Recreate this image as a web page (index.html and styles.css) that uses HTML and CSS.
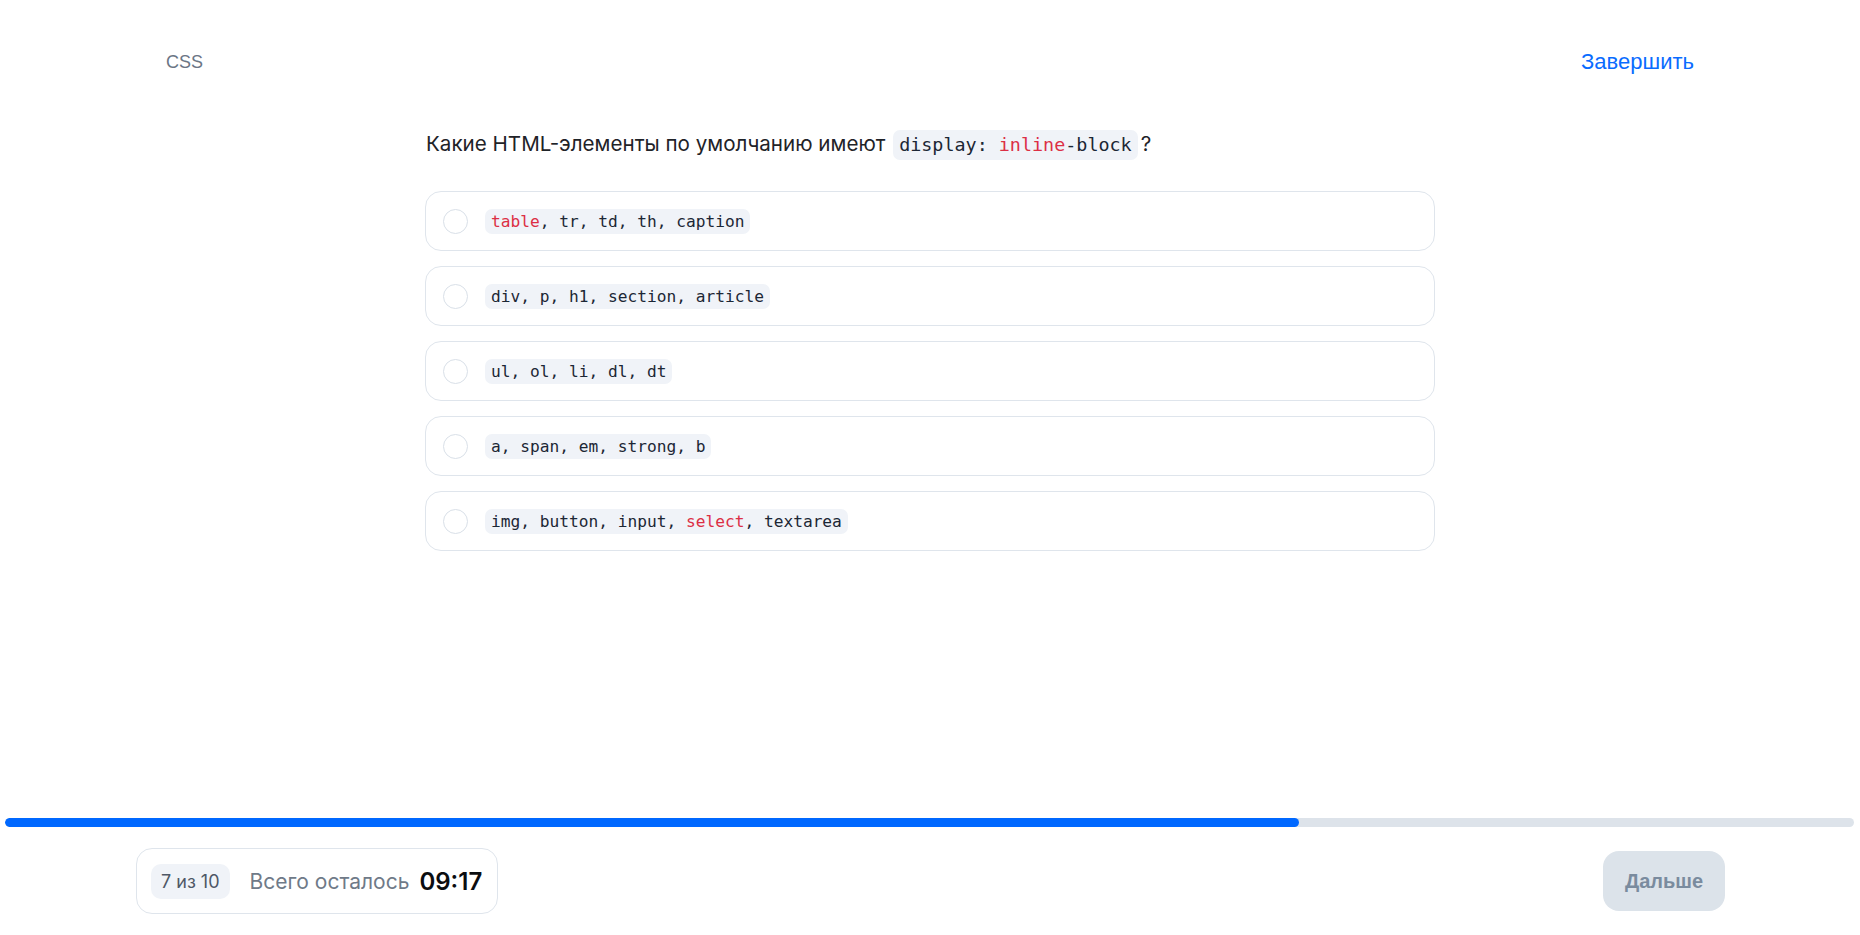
FILE: index.html
```html
<!DOCTYPE html>
<html lang="ru">
<head>
<meta charset="utf-8">
<title>CSS тест</title>
<link rel="stylesheet" href="styles.css">
</head>
<body>
<div class="page">
  <header class="topbar">
    <span class="topic">CSS</span>
    <a class="finish" href="#">Завершить</a>
  </header>

  <main class="quiz">
    <h1 class="question">Какие HTML-элементы по умолчанию имеют <code class="qcode">display: <span class="kw">inline</span>-block</code>?</h1>
    <ul class="options">
      <li class="option"><span class="radio"></span><code class="ocode"><span class="kw">table</span>, tr, td, th, caption</code></li>
      <li class="option"><span class="radio"></span><code class="ocode">div, p, h1, section, article</code></li>
      <li class="option"><span class="radio"></span><code class="ocode">ul, ol, li, dl, dt</code></li>
      <li class="option"><span class="radio"></span><code class="ocode">a, span, em, strong, b</code></li>
      <li class="option"><span class="radio"></span><code class="ocode">img, button, input, <span class="kw">select</span>, textarea</code></li>
    </ul>
  </main>

  <div class="progress"><div class="progress-fill" style="width:70%"></div></div>

  <footer class="bottombar">
    <div class="status">
      <span class="counter">7 из 10</span>
      <span class="remain">Всего осталось</span>
      <span class="timer">09:17</span>
    </div>
    <button class="next" type="button">Дальше</button>
  </footer>
</div>
</body>
</html>
```

FILE: styles.css
```css
* { box-sizing: border-box; }

html, body {
  margin: 0;
  padding: 0;
  background: #ffffff;
}

body {
  font-family: Inter, "Noto Sans", sans-serif;
  color: #1d2126;
}

.page {
  height: 935px;
  display: flex;
  flex-direction: column;
}

.topbar {
  display: flex;
  justify-content: space-between;
  align-items: center;
  padding: 50px 166px 0 166px;
  height: 74px;
  font-family: "Liberation Sans", Arial, sans-serif;
}

.topic {
  font-size: 18px;
  line-height: 24px;
  color: #6b7685;
}

.finish {
  font-size: 22px;
  line-height: 24px;
  color: #0a6cff;
  text-decoration: none;
}

.quiz {
  width: 1010px;
  margin: 54px auto 0 auto;
}

.question {
  margin: 0;
  font-size: 20.6px;
  font-weight: 400;
  line-height: 32px;
  color: #1f2328;
  padding-left: 1px;
}

code {
  font-family: "DejaVu Sans Mono", "Liberation Mono", monospace;
  background: #f0f3f8;
  color: #1c2735;
  border-radius: 7px;
}

.qcode {
  font-size: 18.4px;
  padding: 4px 6px 5px 6px;
  margin: 0 3px 0 2px;
}

.kw { color: #dc2f45; }

.options {
  list-style: none;
  margin: 30px 0 0 0;
  padding: 0;
  display: flex;
  flex-direction: column;
  gap: 15px;
}

.option {
  height: 60px;
  border: 1px solid #dfe5ec;
  border-radius: 16px;
  display: flex;
  align-items: center;
  gap: 17px;
  padding: 0 0 0 17px;
}

.radio {
  width: 25px;
  height: 25px;
  border: 1px solid #d9e0e8;
  border-radius: 50%;
  flex: none;
}

.ocode {
  font-size: 16.2px;
  line-height: 21px;
  padding: 2px 6px;
}

.progress {
  margin: auto 6px 0 5px;
  height: 9px;
  background: #dde3ea;
  border-radius: 5px;
  overflow: hidden;
}

.progress-fill {
  height: 100%;
  background: #0068ff;
  border-radius: 5px;
}

.bottombar {
  display: flex;
  justify-content: space-between;
  align-items: center;
  padding: 0 135px 0 136px;
  height: 108px;
}

.status {
  display: flex;
  align-items: center;
  height: 66px;
  border: 1px solid #dfe5ec;
  border-radius: 16px;
  padding: 0 15px 0 14px;
}

.counter {
  background: #f0f3f8;
  border-radius: 10px;
  height: 35px;
  line-height: 35px;
  padding: 0 10px;
  font-size: 18px;
  color: #4e5866;
}

.remain {
  margin-left: 20px;
  font-size: 21px;
  color: #6f7a88;
}

.timer {
  margin-left: 10px;
  font-size: 24px;
  font-weight: 600;
  color: #0b0d10;
}

.next {
  width: 122px;
  height: 60px;
  border: none;
  border-radius: 16px;
  background: #dce3ea;
  color: #7a8b9e;
  font-family: "Liberation Sans", Arial, sans-serif;
  font-size: 20px;
  font-weight: 700;
  padding: 0;
}
```
